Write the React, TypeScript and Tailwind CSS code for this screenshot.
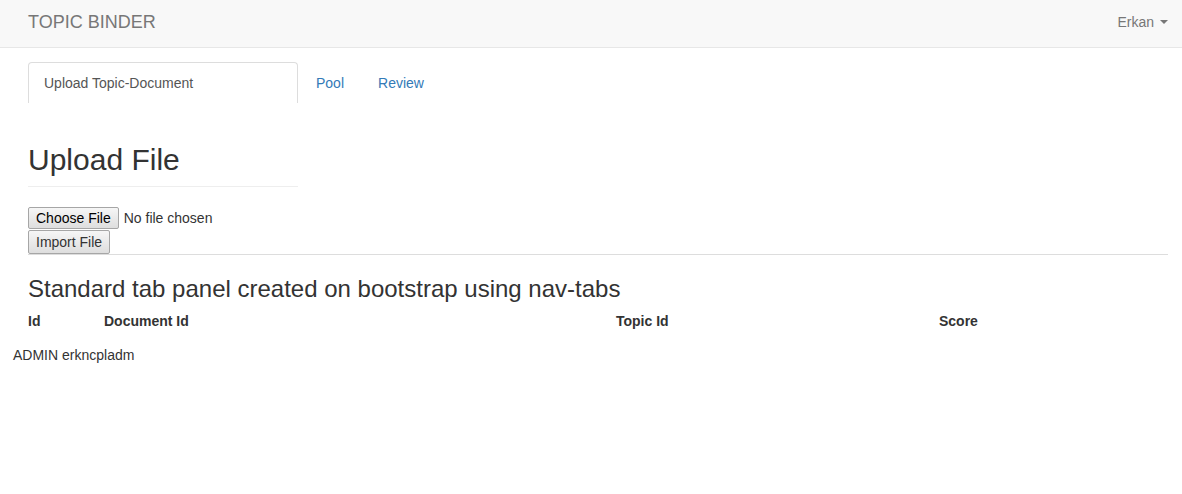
import { useState } from 'react';

const tabs = ['Upload Topic-Document', 'Pool', 'Review'];

export default function App() {
  const [active, setActive] = useState(0);

  return (
    <div className="min-h-[494px] bg-white text-[14px] leading-[20px] text-[#333] font-['Liberation_Sans',Arial,sans-serif]">
      <nav className="flex h-[48px] items-center justify-between border-b border-[#e7e7e7] bg-[#f8f8f8] pb-[4px] pl-[28px] pr-[14px]">
        <span className="text-[18px] text-[#777]">TOPIC BINDER</span>
        <span className="flex items-center gap-[6px] text-[#777]">
          Erkan
          <span className="h-0 w-0 border-x-[4px] border-t-[4px] border-x-transparent border-t-[#777]" />
        </span>
      </nav>

      <div className="pl-[28px] pr-[14px]">
        <ul className="mt-[14px] flex">
          {tabs.map((t, i) => (
            <li key={t} className="mr-[2px]">
              <button
                onClick={() => setActive(i)}
                className={
                  i === active
                    ? 'block w-[270px] rounded-t-[4px] border border-b-0 border-[#ddd] bg-white px-[15px] py-[10px] text-left text-[#555]'
                    : 'block border border-transparent px-[15px] py-[10px] text-[#337ab7]'
                }
              >
                {t}
              </button>
            </li>
          ))}
        </ul>

        <h2 className="mt-[39px] w-[270px] border-b border-[#eee] pb-[10px] text-[30px] leading-[33px]">Upload File</h2>

        <div className="mt-[20px] flex flex-col items-start">
          <div className="flex items-center gap-[5px]">
            <button className="h-[22px] rounded-[2px] border border-[#a6a6a6] bg-gradient-to-b from-[#f6f6f6] to-[#dedede] px-[7px] text-black">
              Choose File
            </button>
            <span>No file chosen</span>
          </div>
          <button className="mt-[1px] h-[24px] rounded-[2px] border border-[#a6a6a6] bg-gradient-to-b from-[#f6f6f6] to-[#dedede] px-[7px] text-[#333]">
            Import File
          </button>
        </div>
        <hr className="border-t border-[#ddd]" />

        <h3 className="mt-[21px] text-[24px] leading-[26px]">Standard tab panel created on bootstrap using nav-tabs</h3>

        <div className="mt-[1px] grid grid-cols-[76px_512px_323px_1fr] font-bold">
          <div className="py-[8px]">Id</div>
          <div className="py-[8px]">Document Id</div>
          <div className="py-[8px]">Topic Id</div>
          <div className="py-[8px]">Score</div>
        </div>
      </div>

      <div className="mt-[6px] pl-[13px]">ADMIN erkncpladm</div>
    </div>
  );
}
